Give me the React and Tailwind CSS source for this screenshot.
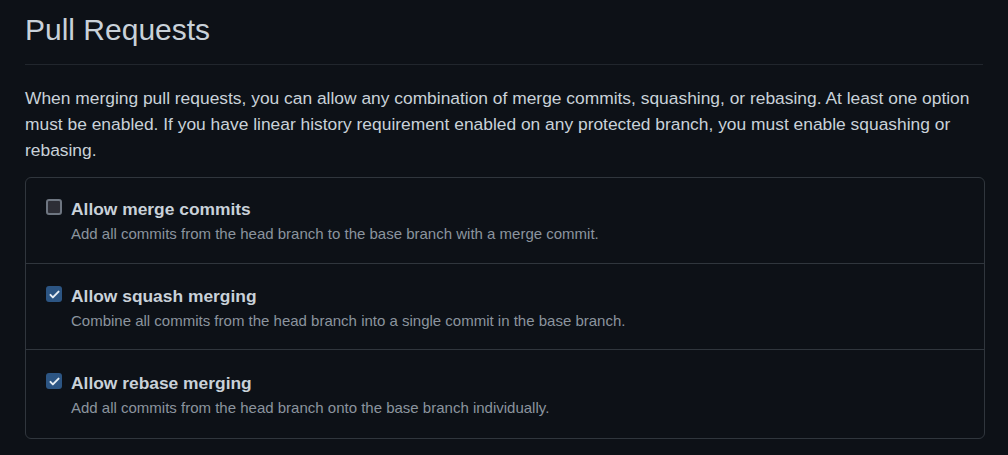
import React from 'react';

const options = [
  {
    id: 'merge',
    label: 'Allow merge commits',
    note: 'Add all commits from the head branch to the base branch with a merge commit.',
    checked: false,
    pad: 'pt-[20px] pb-[19px]',
  },
  {
    id: 'squash',
    label: 'Allow squash merging',
    note: 'Combine all commits from the head branch into a single commit in the base branch.',
    checked: true,
    pad: 'pt-[21px] pb-[18px]',
  },
  {
    id: 'rebase',
    label: 'Allow rebase merging',
    note: 'Add all commits from the head branch onto the base branch individually.',
    checked: true,
    pad: 'pt-[22px] pb-[20px]',
  },
];

function Checkbox({ checked }) {
  if (checked) {
    return (
      <span className="mt-[1px] flex h-4 w-4 shrink-0 items-center justify-center rounded-[3px] bg-[#2c5583]">
        <svg viewBox="0 0 16 16" className="h-[13px] w-[13px]" fill="none" stroke="#e6edf3" strokeWidth="2.4" strokeLinecap="round" strokeLinejoin="round">
          <path d="M3 8.5l3 3 7-7" />
        </svg>
      </span>
    );
  }
  return <span className="mt-[1px] h-4 w-4 shrink-0 rounded-[3px] border-2 border-[#6e7681] bg-[#2d2e36]" />;
}

export default function App() {
  return (
    <div className="min-h-[455px] bg-[#0d1117] px-[25px] text-[#c9d1d9]" style={{ fontFamily: '"Liberation Sans", Arial, sans-serif' }}>
      <h2 className="border-b border-[#21262d] pt-[10px] pb-[14px] text-[30px] leading-[40px] font-normal">Pull Requests</h2>
      <p className="mt-[20px] mb-[14px] text-[17.4px] leading-[26px]">
        When merging pull requests, you can allow any combination of merge commits, squashing, or rebasing. At least one option must be enabled. If you have linear history requirement enabled on any protected branch, you must enable squashing or rebasing.
      </p>
      <div className="w-[960px] rounded-md border border-[#30363d]">
        {options.map((o, i) => (
          <div key={o.id} className={`flex gap-[9px] px-5 ${o.pad} ${i > 0 ? 'border-t border-[#30363d]' : ''}`}>
            <Checkbox checked={o.checked} />
            <div className="flex flex-col">
              <span className="text-[17.4px] leading-[22px] font-bold text-[#c9d1d9]">{o.label}</span>
              <span className="mt-[4px] text-[15px] leading-[20px] text-[#8b949e]">{o.note}</span>
            </div>
          </div>
        ))}
      </div>
    </div>
  );
}
